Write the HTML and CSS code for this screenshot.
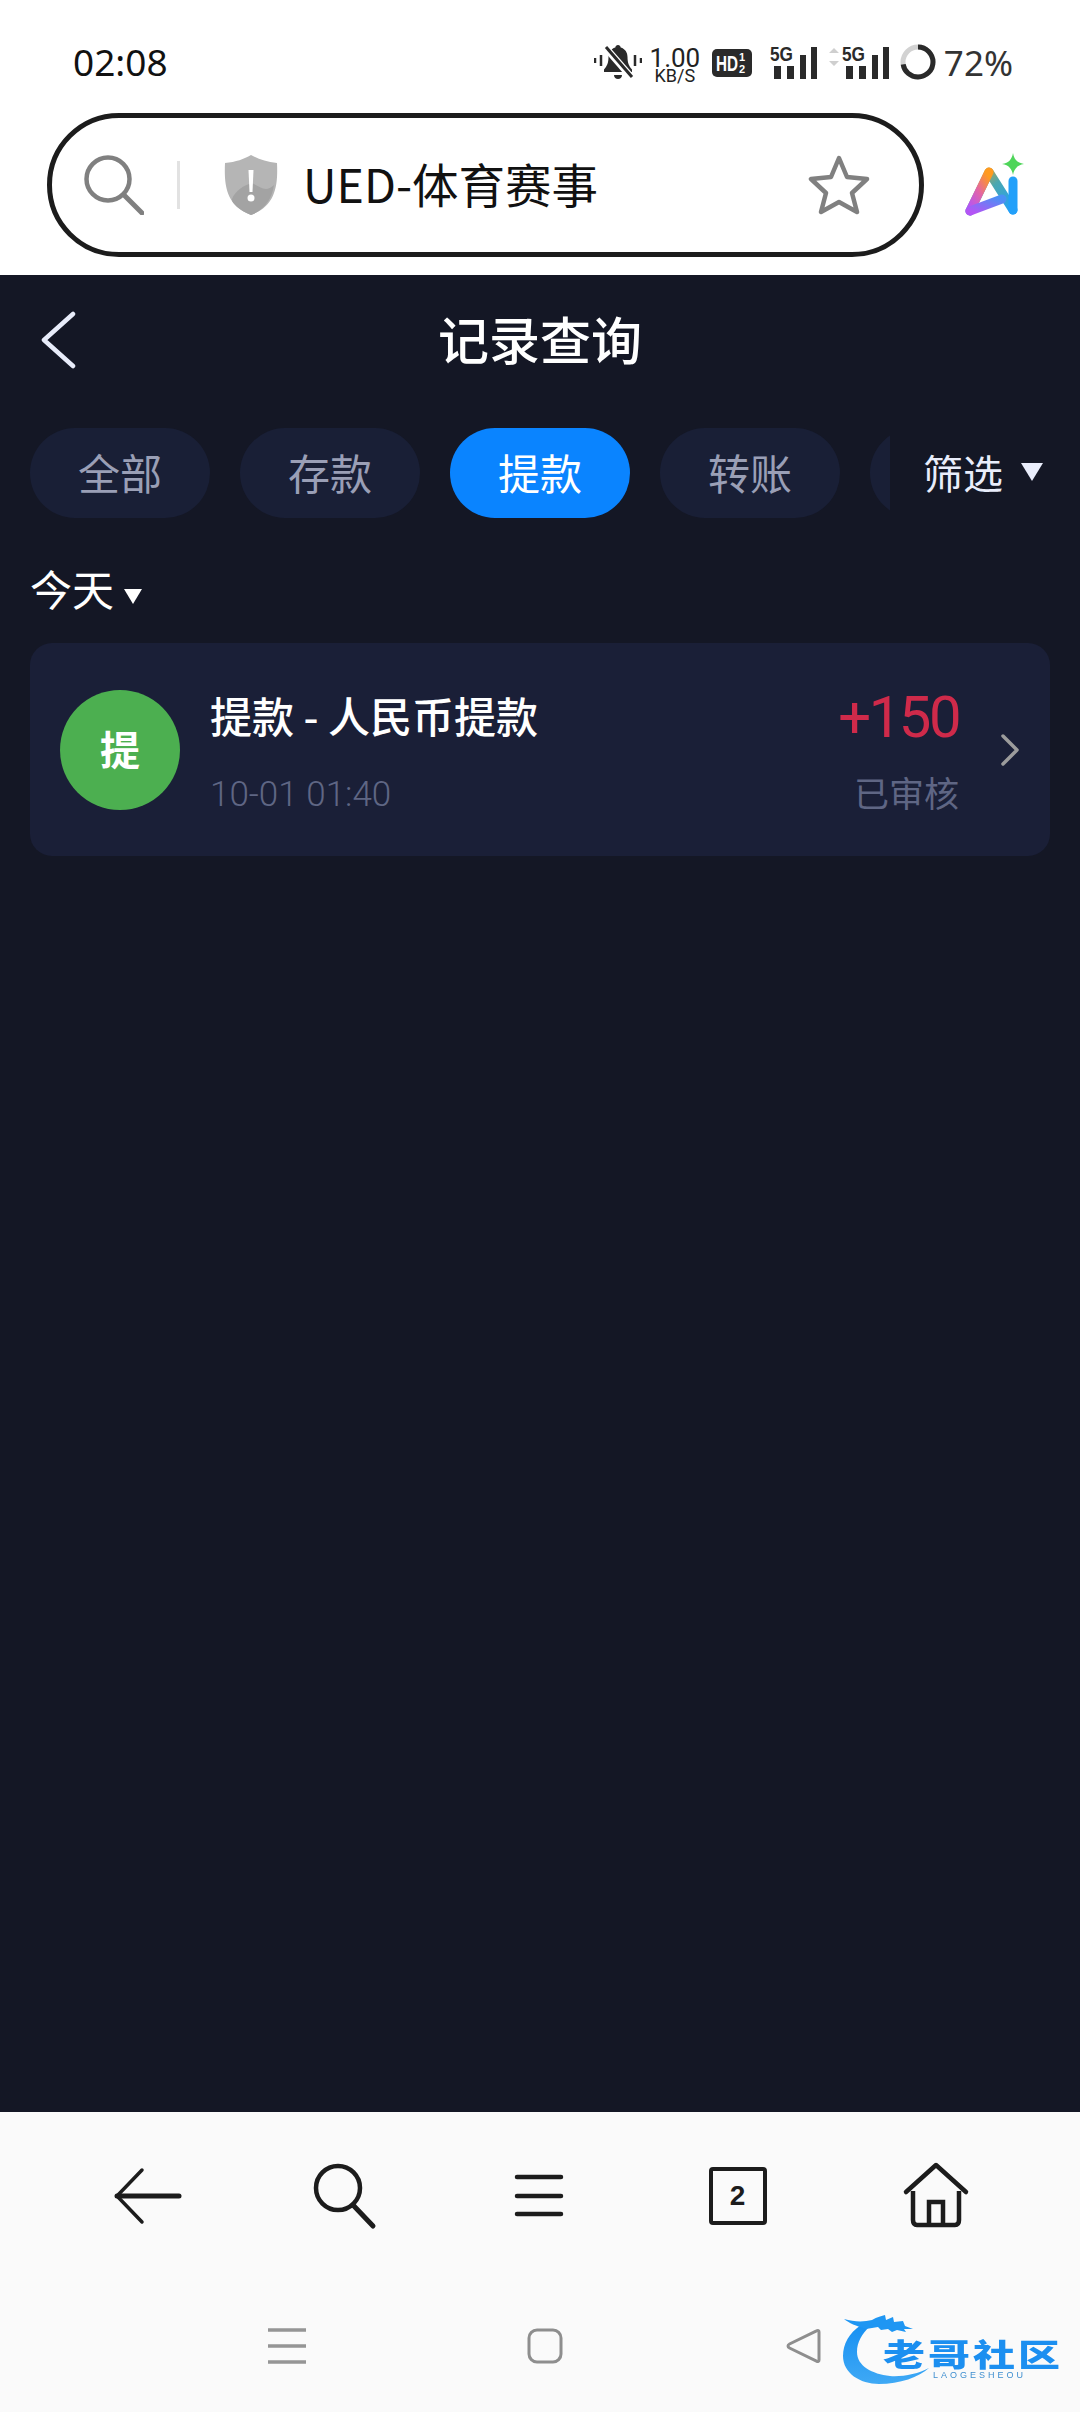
FILE: index.html
```html
<!DOCTYPE html>
<html>
  <head>
    <meta charset="utf-8">
    <meta name="viewport" content="width=device-width">
    <title>记录查询</title>
    <link rel="stylesheet" href="styles.css">
  </head>
  <body>
    <!-- Phone status bar -->
    <div class="status">
      <span class="time">02:08</span>
      <div class="status-icons">
        <svg class="bell" width="48" height="36" viewBox="0 0 48 36">
          <path d="M24 1c1.500 0 2.500 1 2.700 2.400 4.500 1.300 6.800 5 6.800 9.600 0 6 1.500 9 4.500 12.500v2.500H10v-2.500c3-3.500 4.500-6.500 4.500-12.500 0-4.600 2.300-8.300 6.800-9.600C21.500 2 22.500 1 24 1z" fill="#2a2a2a"/>
          <path d="M20 31h8c0 2.500-1.800 4-4 4s-4-1.500-4-4z" fill="#2a2a2a"/>
          <path d="M11 3l27 31" stroke="#fff" stroke-width="7"/>
          <path d="M12 3l26 30" stroke="#2a2a2a" stroke-width="3"/>
          <path d="M1 14v5M7 11v11M41 11v11M47 14v5" stroke="#2a2a2a" stroke-width="2.500"/>
        </svg>
        <div class="speed"><b>1.00</b><span>KB/S</span></div>
        <svg class="hd" width="40" height="28" viewBox="0 0 40 28">
          <rect width="40" height="28" rx="5" fill="#2a2a2a"/>
          <text x="4" y="22" class="hd-text" textLength="22" lengthAdjust="spacingAndGlyphs">HD</text>
          <text x="27" y="12" class="hd-frac">1</text>
          <text x="27" y="24" class="hd-frac">2</text>
        </svg>
        <svg class="sig-a" width="47" height="34" viewBox="0 0 47 34">
          <text x="0" y="16" class="sig-text" textLength="23" lengthAdjust="spacingAndGlyphs">5G</text>
          <path d="M4 21h7v13H4zM17 21h7v13h-7zM30 10h6v24h-6zM41 2h6v32h-6z" fill="#2a2a2a"/>
        </svg>
        <svg class="sig-b" width="60" height="34" viewBox="0 0 60 34">
          <path d="M5 3l5 5H0zM5 21l5-5H0z" fill="#cfcfcf"/>
          <text x="13" y="16" class="sig-text" textLength="23" lengthAdjust="spacingAndGlyphs">5G</text>
          <path d="M17 21h7v13h-7zM30 21h7v13h-7zM43 10h6v24h-6zM54 2h6v32h-6z" fill="#2a2a2a"/>
        </svg>
        <svg class="ring" width="36" height="36" viewBox="0 0 36 36">
          <circle cx="18" cy="18" r="15" fill="none" stroke="#d2d2d2" stroke-width="5"/>
          <circle cx="18" cy="18" r="15" fill="none" stroke="#2a2a2a" stroke-width="5" stroke-dasharray="67.900 94.300" transform="rotate(-90 18 18)"/>
        </svg>
        <span class="pct">72%</span>
      </div>
    </div>

    <!-- Browser address bar -->
    <div class="addr-row">
      <div class="addr">
        <svg class="addr-search" width="60" height="60" viewBox="0 0 60 60">
          <circle cx="24" cy="24" r="21.500" fill="none" stroke="#808080" stroke-width="4.500"/>
          <path d="M40 40l18 18" stroke="#808080" stroke-width="5" stroke-linecap="round"/>
        </svg>
        <span class="addr-line"></span>
        <svg class="shield" width="54" height="60" viewBox="0 0 54 60">
          <path d="M27 0c7 4 15 7 26 8 1 22-1 43-26 52C2 51 0 30 1 8c11-1 19-4 26-8z" fill="#b5b5b5"/>
          <path d="M27 60C14 55 7 47 8 44c3-8 12-14 20-16 8 4 14 10 22 2-2 13-8 24-23 30z" fill="#a3a3a3"/>
          <path d="M24.500 15h5l-1 22h-3z" fill="#fff"/>
          <circle cx="27" cy="43" r="3.500" fill="#fff"/>
        </svg>
        <span class="addr-text">UED-体育赛事</span>
        <svg class="star" width="62" height="60" viewBox="0 0 62 60">
          <path d="M31 3l8 19 20 2-15 14 5 19-18-10-18 10 5-19L3 24l20-2z" fill="none" stroke="#808080" stroke-width="4.500" stroke-linejoin="round"/>
        </svg>
      </div>
      <svg class="ai" width="62" height="64" viewBox="0 0 62 64">
        <defs>
          <linearGradient id="aiLeft" x1="0.800" y1="0" x2="0.100" y2="1">
            <stop offset="0" stop-color="#ff9a1f"/>
            <stop offset="0.500" stop-color="#e264a8"/>
            <stop offset="1" stop-color="#b455f5"/>
          </linearGradient>
          <linearGradient id="aiRight" x1="0" y1="0" x2="1" y2="1">
            <stop offset="0" stop-color="#f0a020"/>
            <stop offset="0.450" stop-color="#4aa8b0"/>
            <stop offset="1" stop-color="#22a0fa"/>
          </linearGradient>
          <linearGradient id="aiBar" x1="0" y1="1" x2="1" y2="0">
            <stop offset="0" stop-color="#b455f5"/>
            <stop offset="1" stop-color="#4a90f5"/>
          </linearGradient>
        </defs>
        <path d="M7 58L26 19l24 38" fill="none" stroke="url(#aiRight)" stroke-width="9" stroke-linecap="round" stroke-linejoin="round"/>
        <path d="M50 57V28" stroke="#22a0fa" stroke-width="9" stroke-linecap="round"/>
        <path d="M7 58L26 19" fill="none" stroke="url(#aiLeft)" stroke-width="9" stroke-linecap="round"/>
        <path d="M7 58l32-12" stroke="url(#aiBar)" stroke-width="9" stroke-linecap="round"/>
        <path d="M50 0c1 6 4 10 11 11-7 1-10 5-11 11-1-6-4-10-11-11 7-1 10-5 11-11z" fill="#4fd55a"/>
      </svg>
    </div>

    <!-- Web page -->
    <div class="page">
      <div class="head">
        <svg class="back" width="36" height="58" viewBox="0 0 36 58">
          <path d="M33 3L4 29l29 26" fill="none" stroke="#e8ecfa" stroke-width="4.500" stroke-linecap="round" stroke-linejoin="round"/>
        </svg>
        <h1 class="title">记录查询</h1>
      </div>

      <div class="filters">
        <div class="tabs">
          <span class="tab">全部</span>
          <span class="tab">存款</span>
          <span class="tab active">提款</span>
          <span class="tab">转账</span>
          <span class="tab"></span>
        </div>
        <div class="filter-btn">筛选<i class="tri tri-big"></i></div>
      </div>

      <div class="day">今天<i class="tri tri-small"></i></div>

      <div class="card">
        <div class="badge">提</div>
        <div class="info">
          <div class="info-title">提款 - 人民币提款</div>
          <div class="info-date">10-01 01:40</div>
        </div>
        <div class="amount">
          <div class="amount-num">+150</div>
          <div class="amount-state">已审核</div>
        </div>
        <svg class="more" width="20" height="32" viewBox="0 0 20 32">
          <path d="M3 2l14 14L3 30" fill="none" stroke="#9c9c9c" stroke-width="3.500" stroke-linecap="round" stroke-linejoin="round"/>
        </svg>
      </div>
    </div>

    <!-- Browser toolbar and phone nav keys -->
    <div class="bottom">
      <div class="toolbar">
        <svg width="80" height="80" viewBox="0 0 80 80">
          <path d="M34 14L9 40l25 26" fill="none" stroke="#1c1c1c" stroke-width="3.500" stroke-linecap="round" stroke-linejoin="round"/>
          <path d="M9 40h62" stroke="#1c1c1c" stroke-width="5" stroke-linecap="round"/>
        </svg>
        <svg width="80" height="80" viewBox="0 0 80 80">
          <circle cx="33" cy="32" r="22" fill="none" stroke="#1c1c1c" stroke-width="4.500"/>
          <path d="M48 49l20 21" stroke="#1c1c1c" stroke-width="5" stroke-linecap="round"/>
        </svg>
        <svg width="80" height="80" viewBox="0 0 80 80">
          <path d="M15 21h44M15 40h44M15 58h44" stroke="#1c1c1c" stroke-width="4.500" stroke-linecap="round"/>
        </svg>
        <div class="tab-count">2</div>
        <svg width="80" height="80" viewBox="0 0 80 80">
          <path d="M10 36L40 9l30 27" fill="none" stroke="#1c1c1c" stroke-width="4.500" stroke-linecap="round" stroke-linejoin="round"/>
          <path d="M17 35v29c0 3 1 5 4 5h38c3 0 4-2 4-5V35" fill="none" stroke="#1c1c1c" stroke-width="4.500" stroke-linejoin="round"/>
          <path d="M33 68V46h14v22" fill="none" stroke="#1c1c1c" stroke-width="4.500"/>
        </svg>
      </div>
      <div class="keys">
        <svg class="key-menu" width="38" height="36" viewBox="0 0 38 36">
          <path d="M0 2h38M0 18h38M0 34h38" stroke="#959595" stroke-width="3.500"/>
        </svg>
        <svg class="key-home" width="36" height="36" viewBox="0 0 36 36">
          <rect x="2" y="2" width="32" height="32" rx="8" fill="none" stroke="#8e8e8e" stroke-width="3"/>
        </svg>
        <svg class="key-back" width="36" height="36" viewBox="0 0 36 36">
          <path d="M33 4v28c0 1.500-1 2-2.500 1.200L3.500 20c-2-1-2-3 0-4L30.500 2.800C32 2 33 2.500 33 4z" fill="none" stroke="#8e8e8e" stroke-width="3"/>
        </svg>
      </div>
      <!-- watermark sits over the nav keys -->
      <div class="mark">
        <svg class="mark-dragon" width="100" height="74" viewBox="0 0 100 74">
          <defs>
            <linearGradient id="dragon" x1="0" y1="0" x2="0" y2="1">
              <stop offset="0" stop-color="#1790f2"/>
              <stop offset="1" stop-color="#3fa9f5"/>
            </linearGradient>
          </defs>
          <path d="M19 13C7 21 1 32 1 44c0 17 17 28 36 28 21 0 40-7 50-16-11 6-27 9-39 8C30 62 15 54 15 40c0-10 5-18 13-26z" fill="url(#dragon)"/>
          <path d="M2 7c10 3 20 3 28 1 5-3 10-4 13-5l1 5 7-3 1 5 9-1 2 5 8 3-9 0 2 3-9-2-5 2-4-3-7 1-3-3-12 2C14 14 7 11 2 7z" fill="#1e96f3"/>
        </svg>
        <div class="mark-name">老哥社区</div>
        <div class="mark-sub">LAOGESHEOU</div>
      </div>
    </div>
  </body>
</html>
```

FILE: styles.css
```css
* {
  box-sizing: border-box;
}
html, body {
  margin: 0;
  padding: 0;
}
body {
  width: 1080px;
  height: 2412px;
  display: flex;
  flex-direction: column;
  overflow: hidden;
  background: #fff;
  font-family: "Noto Sans CJK SC", "Noto Sans", sans-serif;
}
svg {
  display: block;
  flex: none;
}

/* status bar */
.status {
  height: 113px;
  display: flex;
  justify-content: space-between;
  padding: 44px 67px 0 73px;
}
.time {
  font-family: "Noto Sans", sans-serif;
  font-size: 37px;
  line-height: 36px;
  color: #111;
}
.status-icons {
  display: flex;
  align-items: flex-start;
  height: 36px;
}
.speed {
  width: 48px;
  margin-left: 9px;
  display: flex;
  flex-direction: column;
  align-items: center;
  font-family: Roboto, sans-serif;
  color: #222;
  margin-top: 2px;
}
.speed b {
  font-weight: 400;
  font-size: 26px;
  line-height: 24px;
}
.speed span {
  font-size: 18px;
  line-height: 12px;
}
.hd {
  margin-left: 13px;
  margin-top: 5px;
}
.hd-text {
  font-family: "Liberation Sans", sans-serif;
  font-size: 22px;
  font-weight: 700;
  fill: #fff;
}
.hd-frac {
  font-family: "Liberation Sans", sans-serif;
  font-size: 11px;
  font-weight: 700;
  fill: #fff;
}
.sig-a {
  margin-left: 18px;
  margin-top: 1px;
}
.sig-b {
  margin-left: 12px;
  margin-top: 1px;
}
.sig-text {
  font-family: "Liberation Sans", sans-serif;
  font-size: 21px;
  font-weight: 700;
  fill: #2a2a2a;
}
.ring {
  margin-left: 11px;
}
.pct {
  margin-left: 8px;
  font-family: "Noto Sans", sans-serif;
  font-size: 35px;
  line-height: 38px;
  color: #333;
}

/* address bar */
.addr-row {
  height: 162px;
  display: flex;
  align-items: flex-start;
}
.addr {
  width: 877px;
  height: 144px;
  margin-left: 47px;
  display: flex;
  align-items: center;
  padding-left: 30px;
  border: 5px solid #1c1c1c;
  border-radius: 72px;
  background: #fff;
}
.addr-search {
  margin-left: 2px;
}
.addr-line {
  width: 3px;
  height: 48px;
  margin-left: 33px;
  background: #e2e2e2;
}
.shield {
  margin-left: 44px;
}
.addr-text {
  margin-left: 25px;
  padding-bottom: 4px;
  font-size: 46.5px;
  line-height: 60px;
  color: #111;
  flex: 1;
}
.star {
  margin-right: 49px;
}
.ai {
  margin: 40px 0 0 39px;
}

/* page */
.page {
  flex: 1;
  background: #141725;
}
.head {
  position: relative;
  height: 133px;
  display: flex;
  align-items: center;
  justify-content: center;
}
.back {
  position: absolute;
  left: 40px;
  top: 36px;
}
.title {
  margin: 0 0 7px;
  font-size: 51px;
  font-weight: 500;
  line-height: 60px;
  color: #fff;
}
.filters {
  margin-top: 20px;
  height: 90px;
  display: flex;
  padding-left: 30px;
}
.tabs {
  width: 860px;
  display: flex;
  gap: 30px;
  overflow: hidden;
}
.tab {
  flex: none;
  width: 180px;
  height: 90px;
  display: flex;
  align-items: center;
  justify-content: center;
  padding-bottom: 3px;
  border-radius: 45px;
  background: #191f36;
  color: #9a9fb6;
  font-size: 42px;
}
.tab.active {
  background: #0a84ff;
  color: #fff;
}
.filter-btn {
  margin-left: 33px;
  padding-bottom: 3px;
  display: flex;
  align-items: center;
  color: #e9edfb;
  font-size: 40px;
}
.tri {
  display: block;
  width: 0;
  height: 0;
  border-style: solid;
  border-color: #e9edfb transparent transparent;
}
.tri-big {
  margin-left: 18px;
  border-width: 18px 11px 0;
}
.tri-small {
  margin: 18px 0 0 10px;
  border-width: 15px 9px 0;
  border-top-color: #fff;
}
.day {
  margin: 50px 0 0 30px;
  height: 44px;
  padding-bottom: 6px;
  display: flex;
  align-items: center;
  color: #fff;
  font-size: 42px;
}
.card {
  margin: 31px 30px 0;
  height: 213px;
  display: flex;
  align-items: center;
  padding: 0 30px;
  border-radius: 22px;
  background: #1a1f37;
}
.badge {
  flex: none;
  width: 120px;
  height: 120px;
  display: flex;
  align-items: center;
  justify-content: center;
  padding-bottom: 3px;
  border-radius: 50%;
  background: #4caf50;
  color: #fff;
  font-size: 40px;
  font-weight: 700;
}
.info {
  flex: 1;
  margin-left: 30px;
  align-self: flex-start;
  padding-top: 47px;
}
.info-title {
  font-size: 42px;
  font-weight: 500;
  line-height: 50px;
  color: #fff;
}
.info-date {
  margin-top: 35px;
  font-family: Roboto, sans-serif;
  font-weight: 300;
  font-size: 35px;
  line-height: 40px;
  color: #5f6684;
}
.amount {
  align-self: flex-start;
  padding-top: 41px;
  text-align: right;
}
.amount-num {
  font-family: Roboto, sans-serif;
  font-size: 58px;
  line-height: 66px;
  letter-spacing: -2.5px;
  color: #cf2a4a;
}
.amount-state {
  margin-top: 20px;
  font-size: 35px;
  line-height: 44px;
  color: #5f6684;
}
.more {
  margin-left: 41px;
}

/* bottom */
.bottom {
  position: relative;
  height: 300px;
  background: #fafafa;
  padding-top: 44px;
}
.toolbar {
  display: grid;
  grid-template-columns: repeat(5, 197px);
  padding-left: 49px;
  justify-items: center;
}
.tab-count {
  width: 58px;
  height: 58px;
  margin: 11px 2px 0 0;
  display: flex;
  align-items: center;
  justify-content: center;
  border: 4px solid #1c1c1c;
  border-radius: 4px;
  font-family: "Liberation Sans", sans-serif;
  font-size: 28px;
  font-weight: 700;
  color: #1c1c1c;
}
.keys {
  margin-top: 92px;
  display: flex;
}
.key-menu {
  margin-left: 268px;
}
.key-home {
  margin-left: 221px;
}
.key-back {
  margin-left: 223px;
}
.mark {
  position: absolute;
  left: 842px;
  top: 200px;
  width: 225px;
  height: 76px;
  filter: blur(0.7px);
}
.mark-dragon {
  position: absolute;
  left: 0;
  top: 0;
}
.mark-name {
  position: absolute;
  left: 41px;
  top: 26px;
  font-size: 42px;
  font-weight: 900;
  line-height: 30px;
  letter-spacing: 3px;
  white-space: nowrap;
  color: #1c8ff0;
  transform: scaleY(0.72);
}
.mark-sub {
  position: absolute;
  left: 91px;
  top: 58px;
  font-family: "Liberation Sans", sans-serif;
  font-size: 9px;
  line-height: 10px;
  letter-spacing: 3px;
  white-space: nowrap;
  color: #3f8fd0;
}
```
